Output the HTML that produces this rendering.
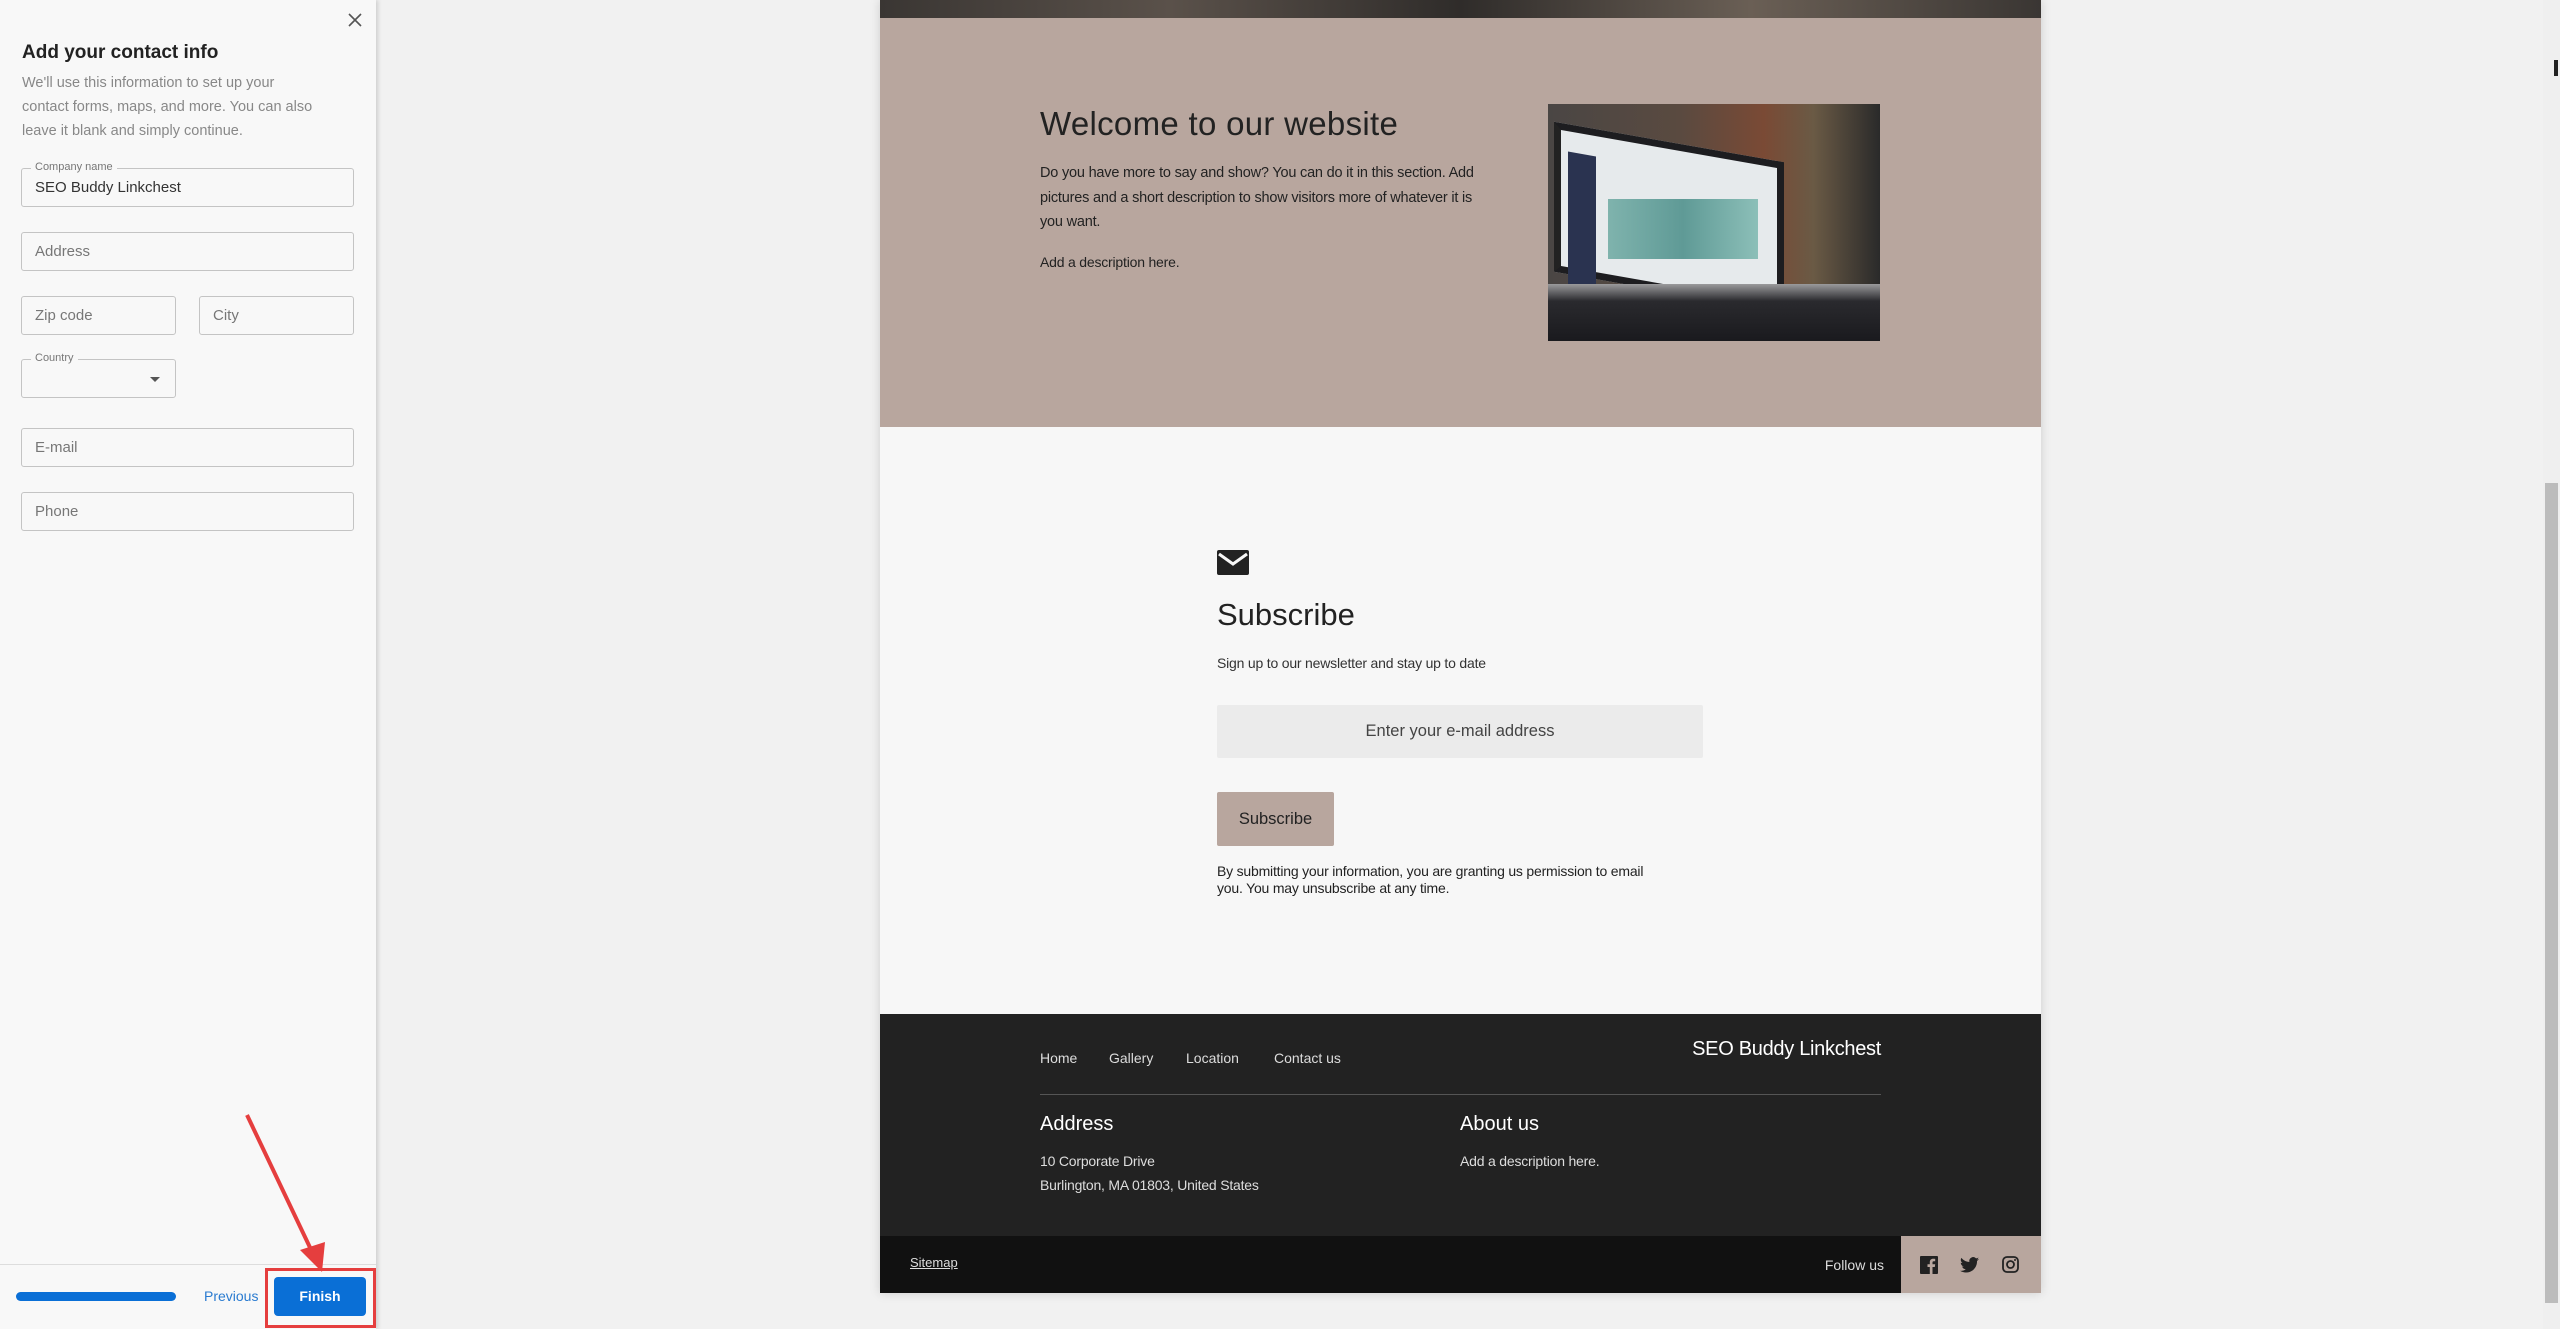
<!DOCTYPE html>
<html><head><meta charset="utf-8"><style>
*{margin:0;padding:0;box-sizing:border-box}
body{width:2560px;height:1329px;overflow:hidden;background:#f1f1f1;font-family:"Liberation Sans",sans-serif;position:relative}
.a{position:absolute}
.panel{left:0;top:0;width:376px;height:1329px;background:#f8f8f8;box-shadow:2px 0 4px rgba(0,0,0,.15)}
.f{position:absolute;border:1px solid #c4c4c4;border-radius:3px;height:39px;font-size:15px;color:#777;padding-left:13px;line-height:37px;background:#f8f8f8}
.lbl{position:absolute;font-size:11px;color:#777;background:#f8f8f8;padding:0 4px;top:-8px;left:9px;line-height:13px}
.site{left:880px;top:0;width:1161px;height:1293px;box-shadow:0 0 10px rgba(0,0,0,.15)}
.t{position:absolute;white-space:nowrap}
</style></head><body>
<div class="a panel">
  <svg class="a" style="left:347px;top:12px" width="16" height="16" viewBox="0 0 16 16"><path d="M2 2L14 14M14 2L2 14" stroke="#555" stroke-width="1.6"/></svg>
  <div class="t" style="left:22px;top:42px;font-size:19px;font-weight:bold;color:#222">Add your contact info</div>
  <div class="a" style="left:22px;top:71px;width:296px;font-size:14.5px;line-height:24px;color:#888">We'll use this information to set up your contact forms, maps, and more. You can also leave it blank and simply continue.</div>
  <div class="f" style="left:21px;top:168px;width:333px;color:#333">SEO Buddy Linkchest<span class="lbl">Company name</span></div>
  <div class="f" style="left:21px;top:232px;width:333px">Address</div>
  <div class="f" style="left:21px;top:296px;width:155px">Zip code</div>
  <div class="f" style="left:199px;top:296px;width:155px">City</div>
  <div class="f" style="left:21px;top:359px;width:155px"><span class="lbl">Country</span><span class="a" style="left:128px;top:17px;border-left:5px solid transparent;border-right:5px solid transparent;border-top:5px solid #555"></span></div>
  <div class="f" style="left:21px;top:428px;width:333px">E-mail</div>
  <div class="f" style="left:21px;top:492px;width:333px">Phone</div>
  <div class="a" style="left:0;top:1264px;width:376px;height:1px;background:#ddd"></div>
  <div class="a" style="left:16px;top:1292px;width:160px;height:9px;border-radius:5px;background:#0a6fd6"></div>
  <div class="t" style="left:204px;top:1288px;font-size:14px;color:#2a7bd0">Previous</div>
  <div class="a" style="left:265px;top:1268px;width:111px;height:60px;border:3px solid #e53e3e"></div>
  <div class="a" style="left:274px;top:1277px;width:92px;height:39px;border-radius:4px;background:#0a6fd6;color:#fff;font-weight:bold;font-size:14px;text-align:center;line-height:39px">Finish</div>
</div>
<svg class="a" style="left:230px;top:1100px" width="100" height="180"><path d="M17 15L85 158" stroke="#e53e3e" stroke-width="4"/><path d="M70 150L92 172L95 142Z" fill="#e53e3e"/></svg>

<div class="a site">
  <div class="a" style="left:0;top:0;width:1161px;height:18px;background:linear-gradient(90deg,#3a3633,#5a514a,#2f2c2a,#6a5f55,#3a3633)"></div>
  <div class="a" style="left:0;top:18px;width:1161px;height:409px;background:#b8a69e"></div>
  <div class="t" style="left:160px;top:105px;font-size:33px;color:#222;letter-spacing:.3px">Welcome to our website</div>
  <div class="a" style="left:160px;top:161px;width:452px;font-size:14.5px;line-height:24.5px;color:#222;letter-spacing:-.2px">Do you have more to say and show? You can do it in this section. Add pictures and a short description to show visitors more of whatever it is you want.</div>
  <div class="t" style="left:160px;top:254px;font-size:14px;color:#222;letter-spacing:-.2px">Add a description here.</div>
  <div class="a" style="left:668px;top:104px;width:332px;height:237px;background:linear-gradient(90deg,#4a4644 0%,#5a4a40 40%,#7a4a35 65%,#6a5a45 80%,#2a2a2a 100%);overflow:hidden">
    <div class="a" style="left:6px;top:38px;width:230px;height:150px;background:#e6eaec;transform:skewY(10deg);border:7px solid #1d1d20;border-left-color:#222"></div>
    <div class="a" style="left:20px;top:50px;width:28px;height:140px;background:#2a3350;transform:skewY(10deg)"></div>
    <div class="a" style="left:60px;top:95px;width:150px;height:60px;background:linear-gradient(90deg,#7fb3ad,#5f9a96,#8cbfb8)"></div>
    <div class="a" style="left:0;top:180px;width:332px;height:57px;background:linear-gradient(180deg,#9a9a9c,#2a2a2e 30%,#1a1a1e)"></div>
  </div>
  <div class="a" style="left:0;top:427px;width:1161px;height:587px;background:#f7f7f7"></div>
  <svg class="a" style="left:337px;top:550px" width="32" height="25" viewBox="0 0 32 25"><rect width="32" height="25" rx="2" fill="#222"/><path d="M2 4L16 14L30 4" stroke="#f7f7f7" stroke-width="3" fill="none"/></svg>
  <div class="t" style="left:337px;top:597px;font-size:31px;color:#222">Subscribe</div>
  <div class="t" style="left:337px;top:655px;font-size:14px;color:#333;letter-spacing:-.2px">Sign up to our newsletter and stay up to date</div>
  <div class="a" style="left:337px;top:705px;width:486px;height:53px;background:#ebebeb;border-radius:2px;text-align:center;line-height:53px;font-size:16.5px;color:#444">Enter your e-mail address</div>
  <div class="a" style="left:337px;top:792px;width:117px;height:54px;background:#b8a69e;border-radius:2px;text-align:center;line-height:54px;font-size:16.5px;color:#222">Subscribe</div>
  <div class="a" style="left:337px;top:863px;width:450px;font-size:14px;line-height:16.5px;color:#222;letter-spacing:-.2px">By submitting your information, you are granting us permission to email you. You may unsubscribe at any time.</div>
  <div class="a" style="left:0;top:1014px;width:1161px;height:222px;background:#222"></div>
  <div class="t" style="left:160px;top:1050px;font-size:14px;color:#ddd">Home</div>
  <div class="t" style="left:229px;top:1050px;font-size:14px;color:#ddd">Gallery</div>
  <div class="t" style="left:306px;top:1050px;font-size:14px;color:#ddd">Location</div>
  <div class="t" style="left:394px;top:1050px;font-size:14px;color:#ddd">Contact us</div>
  <div class="t" style="right:160px;top:1038px;font-size:20px;color:#fff;letter-spacing:-.3px">SEO Buddy Linkchest</div>
  <div class="a" style="left:160px;top:1094px;width:841px;height:1px;background:#555"></div>
  <div class="t" style="left:160px;top:1113px;font-size:20px;color:#fff">Address</div>
  <div class="t" style="left:580px;top:1113px;font-size:20px;color:#fff">About us</div>
  <div class="t" style="left:160px;top:1153px;font-size:14px;color:#ddd;letter-spacing:-.2px">10 Corporate Drive</div>
  <div class="t" style="left:160px;top:1177px;font-size:14px;color:#ddd;letter-spacing:-.2px">Burlington, MA 01803, United States</div>
  <div class="t" style="left:580px;top:1153px;font-size:14px;color:#ddd;letter-spacing:-.2px">Add a description here.</div>
  <div class="a" style="left:0;top:1236px;width:1161px;height:57px;background:#111"></div>
  <div class="t" style="left:30px;top:1255px;font-size:13px;color:#ddd;text-decoration:underline">Sitemap</div>
  <div class="t" style="right:157px;top:1257px;font-size:14px;color:#ddd">Follow us</div>
  <div class="a" style="left:1021px;top:1236px;width:140px;height:57px;background:#b8a69e"></div>
  <svg class="a" style="left:1040px;top:1256px" width="18" height="18" viewBox="0 0 18 18"><rect width="18" height="18" rx="1" fill="#222"/><path d="M12.5 18V11h2.3l.4-2.7h-2.7V6.6c0-.8.2-1.3 1.3-1.3h1.4V2.9c-.3 0-1.1-.1-2-.1-2 0-3.4 1.2-3.4 3.5v2H7.5V11h2.3v7z" fill="#b8a69e"/></svg>
  <svg class="a" style="left:1080px;top:1257px" width="19" height="16" viewBox="0 0 24 20"><path d="M24 2.4c-.9.4-1.8.7-2.8.8 1-.6 1.8-1.6 2.2-2.7-1 .6-2 1-3.1 1.2A4.9 4.9 0 0 0 11.9 6.2 14 14 0 0 1 1.7 1 4.9 4.9 0 0 0 3.2 7.6c-.8 0-1.6-.3-2.2-.6 0 2.4 1.7 4.4 3.9 4.8-.7.2-1.5.2-2.2.1.6 2 2.4 3.4 4.6 3.4A9.9 9.9 0 0 1 0 17.3 14 14 0 0 0 7.5 19.5c9.1 0 14-7.5 14-14v-.6c1-.7 1.8-1.6 2.5-2.5z" fill="#222"/></svg>
  <svg class="a" style="left:1122px;top:1256px" width="17" height="17" viewBox="0 0 17 17"><rect x="1" y="1" width="15" height="15" rx="4" fill="none" stroke="#222" stroke-width="1.8"/><circle cx="8.5" cy="8.5" r="3.5" fill="none" stroke="#222" stroke-width="1.8"/><circle cx="13" cy="4" r="1" fill="#222"/></svg>
</div>
<div class="a" style="left:2543px;top:0;width:17px;height:1329px;background:#efefef"></div>
<div class="a" style="left:2545px;top:483px;width:13px;height:820px;background:#bcbcbc"></div>
<div class="a" style="left:2554px;top:60px;width:4px;height:16px;background:#222"></div>
</body></html>
